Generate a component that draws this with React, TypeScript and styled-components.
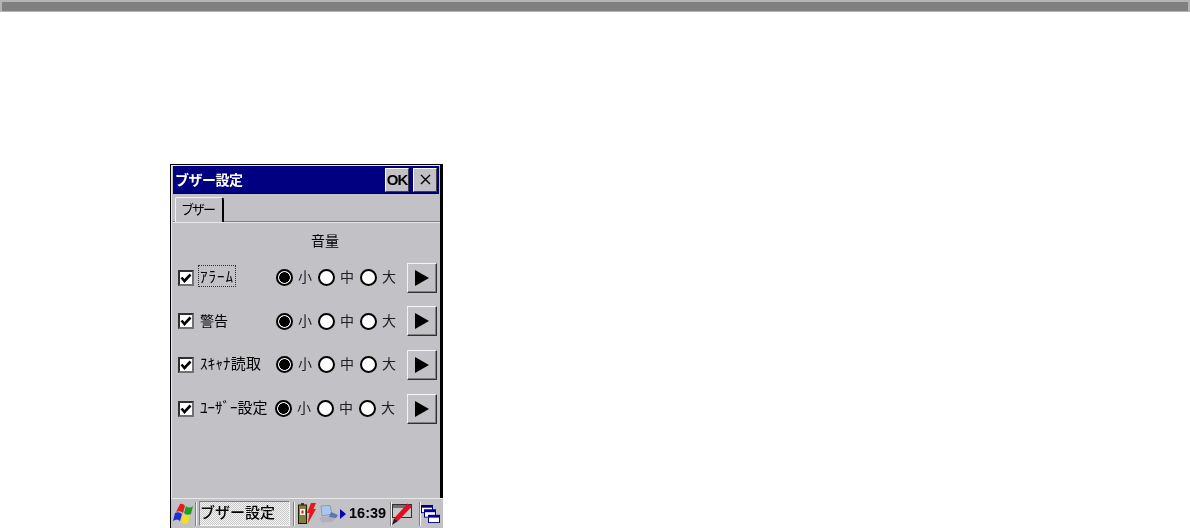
import React from 'react';
import styled, {createGlobalStyle} from 'styled-components';

const GlobalStyle = createGlobalStyle`
  html, body {
    margin: 0;
    padding: 0;
    background: #FFFFFF;
    overflow: hidden;
  }
`;

const UI_FONT = `"Noto Sans CJK JP", "Liberation Sans", sans-serif`;
const FACE = '#C2C1C5';

const Page = styled.div`
  width: 1190px;
  height: 528px;
  overflow: hidden;
  font-family: ${UI_FONT};
  color: #000000;
`;

const TopBar = styled.div`
  height: 9px;
  background: #808080;
  border: 2px solid #B4B4B4;
  border-bottom-width: 1px;
  margin-bottom: 152px;
`;

const Device = styled.div`
  width: 273px;
  height: 364px;
  margin-left: 170px;
  display: flex;
  flex-direction: column;
  box-sizing: border-box;
  background: ${FACE};
  border-top: 1px solid #000000;
  border-left: 1px solid #000000;
  border-right: 3px solid #000000;
  filter: blur(0.4px);
`;

const Dialog = styled.div`
  flex: 1;
  display: flex;
  flex-direction: column;
  border-top: 1px solid #E8E8E8;
  border-left: 1px solid #E8E8E8;
  padding-left: 1px;
  min-height: 0;
`;

const TitleBar = styled.div`
  height: 27px;
  margin-right: 1px;
  display: flex;
  align-items: center;
  gap: 4px;
  padding: 0 2px 0 2px;
  background: #000080;
  border-bottom: 1px solid #000000;
`;

const TitleText = styled.span`
  flex: 1;
  padding-bottom: 2px;
  color: #FFFFFF;
  font-size: 14px;
  font-weight: 700;
  line-height: 20px;
  letter-spacing: -0.5px;
`;

const TitleButton = styled.div<{$size: number}>`
  width: 24px;
  height: 24px;
  box-sizing: border-box;
  display: flex;
  align-items: center;
  justify-content: center;
  background: ${FACE};
  border: 1px solid;
  border-color: #FFFFFF #404040 #404040 #FFFFFF;
  font-family: "Liberation Sans", sans-serif;
  font-size: ${p => p.$size}px;
  font-weight: 700;
  letter-spacing: -1px;
`;

const TabStrip = styled.div`
  height: 25px;
  margin-top: 2px;
  padding-left: 2px;
  display: flex;
  align-items: flex-end;
  border-bottom: 1px solid #808080;
  box-shadow: 0 1px 0 #E8E8E8;
`;

const Tab = styled.div`
  width: 49px;
  height: 25px;
  box-sizing: border-box;
  display: flex;
  align-items: center;
  padding: 0 0 2px 5px;
  font-size: 13px;
  line-height: 16px;
  letter-spacing: -2px;
  background: ${FACE};
  border: 1px solid;
  border-color: #F0F0F0 #000000 transparent #F0F0F0;
  border-right-width: 2px;
  border-bottom: 0;
  border-radius: 2px 3px 0 0;
  position: relative;
  top: 1px;
`;

const Content = styled.div`
  flex: 1;
  display: flex;
  flex-direction: column;
  min-height: 0;
`;

const Heading = styled.div`
  height: 20px;
  margin-top: 8px;
  margin-bottom: 12.5px;
  padding-left: 138px;
  font-size: 14px;
  line-height: 20px;
`;

const Rows = styled.div`
  display: flex;
  flex-direction: column;
  gap: 13.7px;
`;

const Row = styled.div`
  height: 30px;
  display: grid;
  grid-template-columns: 16px 1fr auto 30px;
  align-items: center;
  padding: 0 3px 0 5px;
`;

const Check = styled.div`
  width: 16px;
  height: 16px;
  box-sizing: border-box;
  display: flex;
  align-items: center;
  justify-content: center;
  background: #FFFFFF;
  border: 2px solid;
  border-color: #303030 #707070 #707070 #303030;
`;

const Label = styled.span<{$focused?: boolean; $size: number; $spacing: number}>`
  justify-self: start;
  margin: 0 0 3px 5px;
  padding: 0 1px;
  font-size: ${p => p.$size}px;
  line-height: 20px;
  white-space: nowrap;
  letter-spacing: ${p => p.$spacing}px;
  outline: ${p => (p.$focused ? '1px dotted #303030' : 'none')};
`;

const RadioGroup = styled.div<{$shift: number}>`
  display: flex;
  align-items: center;
  margin-right: 5px;
  transform: translateX(${p => p.$shift}px);
`;

const Radio = styled.span<{$checked?: boolean}>`
  width: 17px;
  height: 17px;
  box-sizing: border-box;
  border-radius: 50%;
  border: 2px solid #000000;
  background: ${p => (p.$checked ? 'radial-gradient(circle, #000000 0 5px, #FFFFFF 5.6px)' : '#FFFFFF')};
`;

const RadioText = styled.span`
  width: 25px;
  margin-bottom: 3px;
  padding-left: 5px;
  box-sizing: border-box;
  font-size: 14px;
  line-height: 20px;
  color: #202020;
`;

const PlayButton = styled.div`
  width: 30px;
  height: 30px;
  box-sizing: border-box;
  display: flex;
  align-items: center;
  justify-content: center;
  background: ${FACE};
  border: 1px solid;
  border-color: #F4F4F4 #303030 #303030 #F4F4F4;
  box-shadow: inset -1px -1px 0 #808080;
`;

const Taskbar = styled.div`
  height: 30px;
  flex-shrink: 0;
  margin: 0 -3px 0 -2px;
  box-sizing: border-box;
  display: flex;
  align-items: center;
  background: ${FACE};
  border-top: 1px solid #E8E8E8;
`;

const TrayCell = styled.div<{$width: number; $left?: number}>`
  width: ${p => p.$width}px;
  height: 100%;
  flex-shrink: 0;
  margin-left: ${p => p.$left ?? 0}px;
  display: flex;
  align-items: center;
  justify-content: center;
`;

const Divider = styled.div<{$left?: number}>`
  width: 1px;
  height: 24px;
  flex-shrink: 0;
  margin-left: ${p => p.$left ?? 0}px;
  background: #808080;
  border-right: 1px solid #F4F4F4;
`;

const TaskButton = styled.div`
  width: 91px;
  height: 25px;
  flex-shrink: 0;
  margin: 0 3px 0 2px;
  box-sizing: border-box;
  display: flex;
  align-items: center;
  padding: 0 0 4px 0;
  font-size: 15px;
  font-weight: 500;
  line-height: 20px;
  border: 1px solid;
  border-color: #808080 #F4F4F4 #F4F4F4 #808080;
  background: repeating-conic-gradient(#F4F4F4 0 25%, #C8C8C8 0 50%) 0 0 / 2px 2px;
`;

const Clock = styled.span`
  width: 41px;
  flex-shrink: 0;
  margin-left: 3px;
  padding-bottom: 2px;
  font-family: "Liberation Sans", sans-serif;
  font-size: 14.5px;
  font-weight: 700;
  white-space: nowrap;
`;

const CheckMark = () => (
    <svg width="12" height="12" viewBox="0 0 12 12">
        <path d="M1.5 5.5 L4.5 9 L10.5 2.5" fill="none" stroke="#000" strokeWidth="2.6"/>
    </svg>
);

const PlayIcon = () => (
    <svg width="14" height="16" viewBox="0 0 14 16">
        <path d="M0 0 L14 8 L0 16 Z" fill="#000"/>
    </svg>
);

const CloseIcon = () => (
    <svg width="11" height="11" viewBox="0 0 11 11">
        <path d="M1 1 L10 10 M10 1 L1 10" stroke="#000" strokeWidth="1.4"/>
    </svg>
);

const FlagIcon = () => (
    <svg width="20" height="21" viewBox="0 0 20 21">
        <path d="M7 1 Q10 0 12 3 L10 10 Q7 7 3 9 Z" fill="#E02018"/>
        <path d="M13 3 Q16 6 20 3 L18 11 Q14 13 11 10 Z" fill="#20A020"/>
        <path d="M2 10 Q6 8 9 11 L7 18 Q4 15 0 18 Z" fill="#2030D0"/>
        <path d="M10 11 Q14 14 17 12 L15 20 Q11 22 8 19 Z" fill="#F0E020"/>
    </svg>
);

const BatteryIcon = () => (
    <svg width="9" height="21" viewBox="0 0 9 21">
        <rect x="3" y="0" width="3" height="2" fill="#404020"/>
        <rect x="0.5" y="2" width="8" height="18.5" fill="#808040" stroke="#202000"/>
        <rect x="2" y="6" width="5" height="6" fill="#F4F4F4"/>
        <rect x="3.5" y="7.5" width="2" height="3" fill="#E01010"/>
    </svg>
);

const BoltIcon = () => (
    <svg width="9" height="21" viewBox="0 0 9 21">
        <path d="M4 0 L9 0 L6.5 6 L9 6 L0.5 21 L2.5 10 L0 10 Z" fill="#E81818"/>
    </svg>
);

const ComputerIcon = () => (
    <svg width="21" height="18" viewBox="0 0 21 18">
        <path d="M3 1 L12 0.5 L14 9 L4 11 Z" fill="#A8C8F4" stroke="#9098B0"/>
        <path d="M1 13 L12 11 L20 11 L14 17 L4 17.5 Z" fill="#B0B0C0"/>
        <path d="M13 7 L20 10 L18 13 L11 12 Z" fill="#5878B0"/>
    </svg>
);

const ArrowIcon = () => (
    <svg width="6" height="10" viewBox="0 0 6 10">
        <path d="M0 0 L6 5 L0 10 Z" fill="#0000C0"/>
    </svg>
);

const PenIcon = () => (
    <svg width="20" height="22" viewBox="0 0 20 22">
        <rect x="0.5" y="1.5" width="19" height="13" fill="#C8C8C8" stroke="#303030"/>
        <rect x="1" y="2" width="18" height="3" fill="#707070"/>
        <path d="M15.5 0.5 L20 3.5 L6 18 L2 15.5 Z" fill="#E01020"/>
        <path d="M2 15.5 L6 18 L0 22 Z" fill="#202020"/>
    </svg>
);

const WindowsIcon = () => (
    <svg width="19" height="18" viewBox="0 0 19 20" preserveAspectRatio="none">
        <rect x="0.5" y="0.5" width="11" height="8" fill="#FFFFFF" stroke="#000080"/>
        <rect x="0" y="0" width="12" height="3" fill="#000080"/>
        <rect x="3.5" y="5.5" width="11" height="8" fill="#FFFFFF" stroke="#000080"/>
        <rect x="3" y="5" width="12" height="3" fill="#0000A0"/>
        <rect x="7.5" y="11.5" width="11" height="8" fill="#FFFFFF" stroke="#000080"/>
        <rect x="7" y="11" width="12" height="3" fill="#0000A0"/>
    </svg>
);

const rows: {label: string; size: number; spacing: number; focused?: boolean; shift: number}[] = [
    {label: 'ｱﾗｰﾑ', size: 15, spacing: 1, focused: true, shift: 0},
    {label: '警告', size: 14, spacing: 0, shift: 0},
    {label: 'ｽｷｬﾅ読取', size: 15, spacing: 0.2, shift: 0},
    {label: 'ﾕｰｻﾞｰ設定', size: 15, spacing: 0, shift: -1},
];

const App: React.FC = () => {
    return (
        <Page>
            <GlobalStyle/>
            <TopBar/>
            <Device>
                <Dialog>
                    <TitleBar>
                        <TitleText>ブザー設定</TitleText>
                        <TitleButton $size={15}>OK</TitleButton>
                        <TitleButton $size={12}><CloseIcon/></TitleButton>
                    </TitleBar>
                    <TabStrip>
                        <Tab>ブザー</Tab>
                    </TabStrip>
                    <Content>
                        <Heading>音量</Heading>
                        <Rows>
                            {rows.map((row, index) => (
                                <Row key={index}>
                                    <Check><CheckMark/></Check>
                                    <Label $focused={row.focused} $size={row.size} $spacing={row.spacing}>{row.label}</Label>
                                    <RadioGroup $shift={row.shift}>
                                        <Radio $checked/>
                                        <RadioText>小</RadioText>
                                        <Radio/>
                                        <RadioText>中</RadioText>
                                        <Radio/>
                                        <RadioText>大</RadioText>
                                    </RadioGroup>
                                    <PlayButton><PlayIcon/></PlayButton>
                                </Row>
                            ))}
                        </Rows>
                    </Content>
                    <Taskbar>
                        <TrayCell $width={24}><FlagIcon/></TrayCell>
                        <Divider/>
                        <TaskButton>ブザー設定</TaskButton>
                        <Divider/>
                        <TrayCell $width={9} $left={3}><BatteryIcon/></TrayCell>
                        <TrayCell $width={9}><BoltIcon/></TrayCell>
                        <TrayCell $width={24}><ComputerIcon/></TrayCell>
                        <TrayCell $width={6}><ArrowIcon/></TrayCell>
                        <Clock>16:39</Clock>
                        <Divider/>
                        <TrayCell $width={20}><PenIcon/></TrayCell>
                        <Divider $left={7}/>
                        <TrayCell $width={19}><WindowsIcon/></TrayCell>
                    </Taskbar>
                </Dialog>
            </Device>
        </Page>
    );
};

export default App;
